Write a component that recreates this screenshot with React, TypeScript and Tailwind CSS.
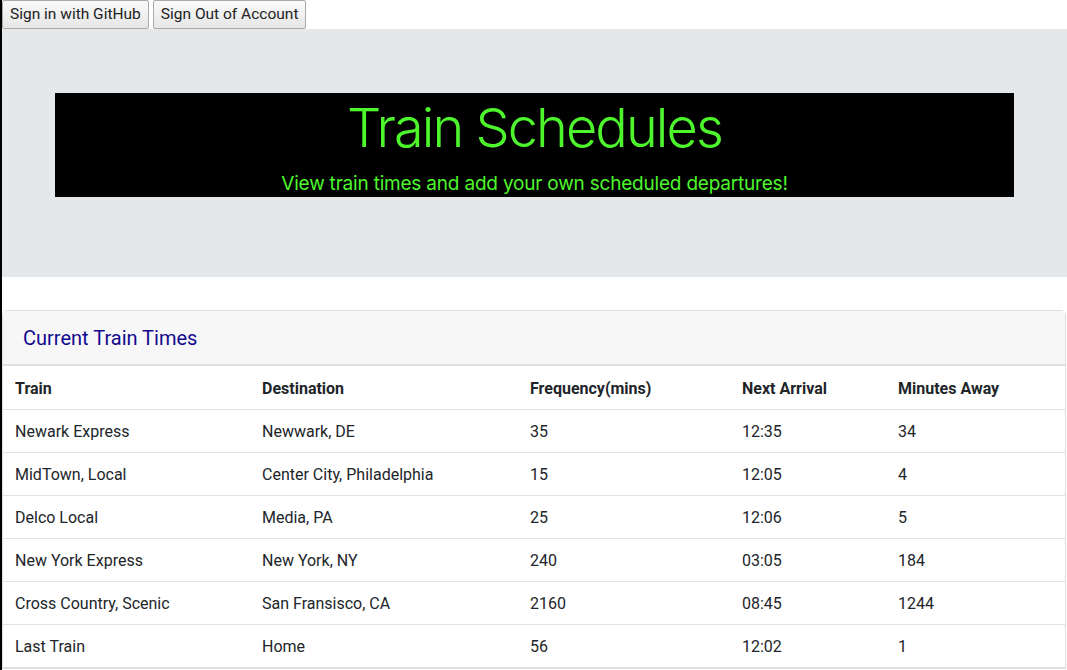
import React from 'react';

interface Train {
  name: string;
  destination: string;
  frequency: number;
  nextArrival: string;
  minutesAway: number;
}

const trains: Train[] = [
  { name: 'Newark Express', destination: 'Newwark, DE', frequency: 35, nextArrival: '12:35', minutesAway: 34 },
  { name: 'MidTown, Local', destination: 'Center City, Philadelphia', frequency: 15, nextArrival: '12:05', minutesAway: 4 },
  { name: 'Delco Local', destination: 'Media, PA', frequency: 25, nextArrival: '12:06', minutesAway: 5 },
  { name: 'New York Express', destination: 'New York, NY', frequency: 240, nextArrival: '03:05', minutesAway: 184 },
  { name: 'Cross Country, Scenic', destination: 'San Fransisco, CA', frequency: 2160, nextArrival: '08:45', minutesAway: 1244 },
  { name: 'Last Train', destination: 'Home', frequency: 56, nextArrival: '12:02', minutesAway: 1 },
];

const App: React.FC = () => {
  return (
    <div className="min-h-[670px] bg-white border-l-2 border-black font-['Roboto',sans-serif] text-[#212529]">
      {/* auth buttons */}
      <div className="flex gap-[4px] h-[29px]">
        <button className="h-[29px] px-[7px] text-[15.5px] text-[#222] bg-gradient-to-b from-[#fafafa] to-[#e6e6e6] border border-[#aaa] rounded-[2px]">
          Sign in with GitHub
        </button>
        <button className="h-[29px] px-[7px] text-[15.5px] text-[#222] bg-gradient-to-b from-[#fafafa] to-[#e6e6e6] border border-[#aaa] rounded-[2px]">
          Sign Out of Account
        </button>
      </div>

      {/* jumbotron */}
      <div className="bg-[#e5e8eb] h-[248px] px-[53px] pt-[64px]">
        <div className="bg-black h-[104px] flex flex-col items-center text-[#4df72c] font-['Inter',sans-serif]">
          <h1 className="text-[54px] font-light leading-none mt-[8px] tracking-[-1.9px]">Train Schedules</h1>
          <p className="text-[19px] mt-[19px] leading-none tracking-[-0.2px]">View train times and add your own scheduled departures!</p>
        </div>
      </div>

      {/* card */}
      <div className="mt-[33px] mr-[1px] border border-[#dfdfdf] rounded-t-[5px]">
        <div className="bg-[#f7f7f7] h-[55px] px-[20px] flex items-center border-b-2 border-[#dee2e6]">
          <h2 className="text-[20px] text-[#120a8f]">Current Train Times</h2>
        </div>
        <table className="w-full text-[16px] border-collapse table-fixed">
          <thead>
            <tr className="h-[43px] border-b border-[#dee2e6]">
              <th className="w-[247px] text-left font-bold pl-[12px] pt-[3px]">Train</th>
              <th className="w-[268px] text-left font-bold pl-[12px] pt-[3px]">Destination</th>
              <th className="w-[212px] text-left font-bold pl-[12px] pt-[3px]">Frequency(mins)</th>
              <th className="w-[156px] text-left font-bold pl-[12px] pt-[3px]">Next Arrival</th>
              <th className="text-left font-bold pl-[12px] pt-[3px]">Minutes Away</th>
            </tr>
          </thead>
          <tbody>
            {trains.map((t) => (
              <tr key={t.name} className="h-[43px] border-b border-[#dee2e6]">
                <td className="pl-[12px] pt-[2px]">{t.name}</td>
                <td className="pl-[12px] pt-[2px]">{t.destination}</td>
                <td className="pl-[12px] pt-[2px]">{t.frequency}</td>
                <td className="pl-[12px] pt-[2px]">{t.nextArrival}</td>
                <td className="pl-[12px] pt-[2px]">{t.minutesAway}</td>
              </tr>
            ))}
          </tbody>
        </table>
      </div>
    </div>
  );
};

export default App;
